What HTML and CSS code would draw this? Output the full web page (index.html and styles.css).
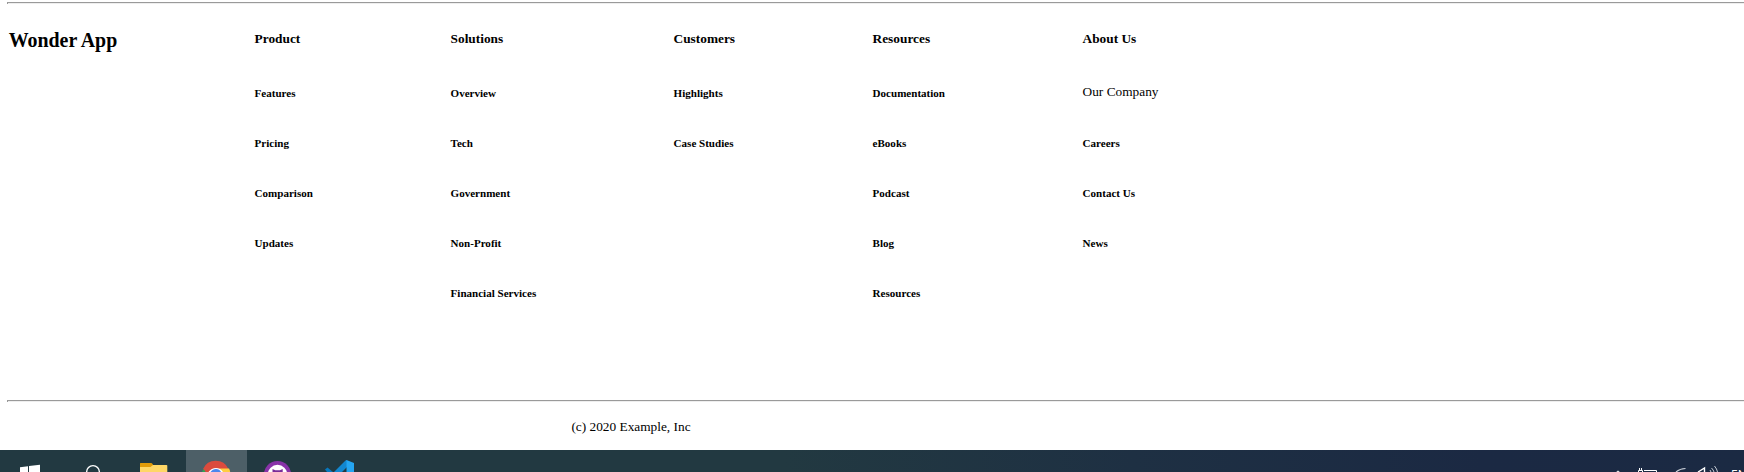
FILE: index.html
```html
<!DOCTYPE html>
<html lang="en">
<head>
<meta charset="utf-8">
<title>Wonder App</title>
<link rel="stylesheet" href="styles.css">
</head>
<body>
<footer class="footer">
  <hr class="rule">
  <div class="columns">
    <h2 class="brand">Wonder App</h2>
    <nav class="column product">
      <h4>Product</h4>
      <h5>Features</h5><h5>Pricing</h5><h5>Comparison</h5><h5>Updates</h5>
    </nav>
    <nav class="column solutions">
      <h4>Solutions</h4>
      <h5>Overview</h5><h5>Tech</h5><h5>Government</h5><h5>Non-Profit</h5><h5>Financial Services</h5>
    </nav>
    <nav class="column customers">
      <h4>Customers</h4>
      <h5>Highlights</h5><h5>Case Studies</h5>
    </nav>
    <nav class="column resources">
      <h4>Resources</h4>
      <h5>Documentation</h5><h5>eBooks</h5><h5>Podcast</h5><h5>Blog</h5><h5>Resources</h5>
    </nav>
    <nav class="column about">
      <h4>About Us</h4>
      <p>Our Company</p><h5>Careers</h5><h5>Contact Us</h5><h5>News</h5>
    </nav>
  </div>
  <hr class="rule">
  <p class="copyright">(c) 2020 Example, Inc</p>
</footer>
<div class="taskbar">
  <div class="apps">
    <svg class="app" viewBox="0 0 62 22"><path fill="#fff" d="M20 17.300l8-1.100V22h-8zM29 16l11-1.200V22H29z"/></svg>
    <svg class="app" viewBox="0 0 62 22"><circle cx="31" cy="22" r="6.400" fill="none" stroke="#fff" stroke-width="1.400"/></svg>
    <svg class="app" viewBox="0 0 62 22"><path fill="#e19b08" d="M16 13.500q0-.5.5-.5H27q1 0 1.500 1l1 1.500L27 18H16z"/><path fill="#ffd766" d="M16 17h10.500l2.500-2h13.500q.8 0 .8.800V22H16z"/></svg>
    <svg class="app active" viewBox="0 0 61 22"><path fill="#db4b3d" d="M17 19a14 14 0 0 1 25.500 0H30q-4 0-6 3h-5z"/><path fill="#2da553" d="M16 22l1.500-3 2.200 3z"/><path fill="#ffcd41" d="M33 18.500h10q1 1.800 1.200 3.500H35z"/><path fill="#fff" d="M22.500 22q3-4 7.500-4t7 4z"/><path fill="#4b87ee" d="M24.500 22q2-3 5.500-3t5 3z"/></svg>
    <svg class="app" viewBox="0 0 62 22"><circle cx="30.500" cy="24.700" r="13.700" fill="#8833a8"/><circle cx="30.500" cy="24.500" r="9.700" fill="#fff"/><path fill="#7a2c99" d="M25.500 22v-3l2.800 1.300h4.600l2.800-1.300v3z"/></svg>
    <svg class="app" viewBox="0 0 62 22"><path fill="#0878bd" d="M16 19.500l2.500-2L24 22H18z"/><path fill="#1287d0" d="M25 22L36.500 10.500l1.500-.5v7L33 22z"/><path fill="#25a6f2" d="M37.500 10l7.500 3v9h-7.500z"/></svg>
  </div>
  <div class="tray">
    <svg viewBox="0 0 134 22" width="134" height="22" fill="none" stroke="#fff" stroke-width="1"><path d="M6.500 22l1.500-1 1.500 1"/><path d="M28.500 22v-1.500h4V22M29.500 20v-2M31.500 20v-2M34 20.500h12.500V22"/><path d="M66 22q4-3.500 9.500-3.500" stroke="#cbd0d8" stroke-width="1.200"/><path d="M88 22l6.500-4v4" stroke-width="1.400"/><path d="M100 20l1 2M101.500 18q2 2 2.500 4M104.500 16q2.500 3 3 6" stroke="#c4cad3"/></svg>
    <span class="language">ENG</span>
  </div>
</div>
</body>
</html>
```
FILE: styles.css
```css
* { box-sizing: border-box; }
body {
  margin: 0;
  height: 472px;
  overflow: hidden;
  background: #fff;
  color: #000;
  font: 13.333px/16px "Liberation Serif", serif;
}
.footer { height: 450px; padding-top: 2px; }
.rule {
  height: 2px;
  margin: 0 0 0 7px;
  border: 0;
  border-top: 1px solid #9a9a9a;
  border-left: 1px solid #9a9a9a;
  background: #eee;
}
.columns { display: flex; height: 396px; padding: 27px 0 0 8.700px; }
.brand { width: 245.900px; margin: -2px 0 0; font-size: 19.900px; line-height: 22px; }
.column h4, .column h5, .column p { margin: 0; white-space: nowrap; }
.column h4 { height: 53px; font-size: 13.333px; }
.column h5 { height: 50px; font-size: 11.067px; line-height: 18px; }
.column p { height: 50px; }
.product { width: 196px; }
.solutions { width: 223px; }
.customers { width: 199px; }
.resources { width: 210px; }
.copyright { margin: 17px 0 0 571.400px; }
.taskbar {
  display: flex;
  justify-content: space-between;
  height: 22px;
  background: linear-gradient(90deg, #223941 0, #223941 45%, #1e3043 65%, #1b2943 85%, #1b2a43 100%);
}
.apps { display: flex; }
.app { width: 62px; height: 22px; }
.app.active { width: 61px; background: #4d5f67; }
.tray { display: flex; width: 134px; height: 22px; overflow: hidden; position: relative; }
.language {
  position: absolute;
  left: 121px;
  top: 17px;
  color: #fff;
  font: 12px/16px "Open Sans", sans-serif;
}
```
